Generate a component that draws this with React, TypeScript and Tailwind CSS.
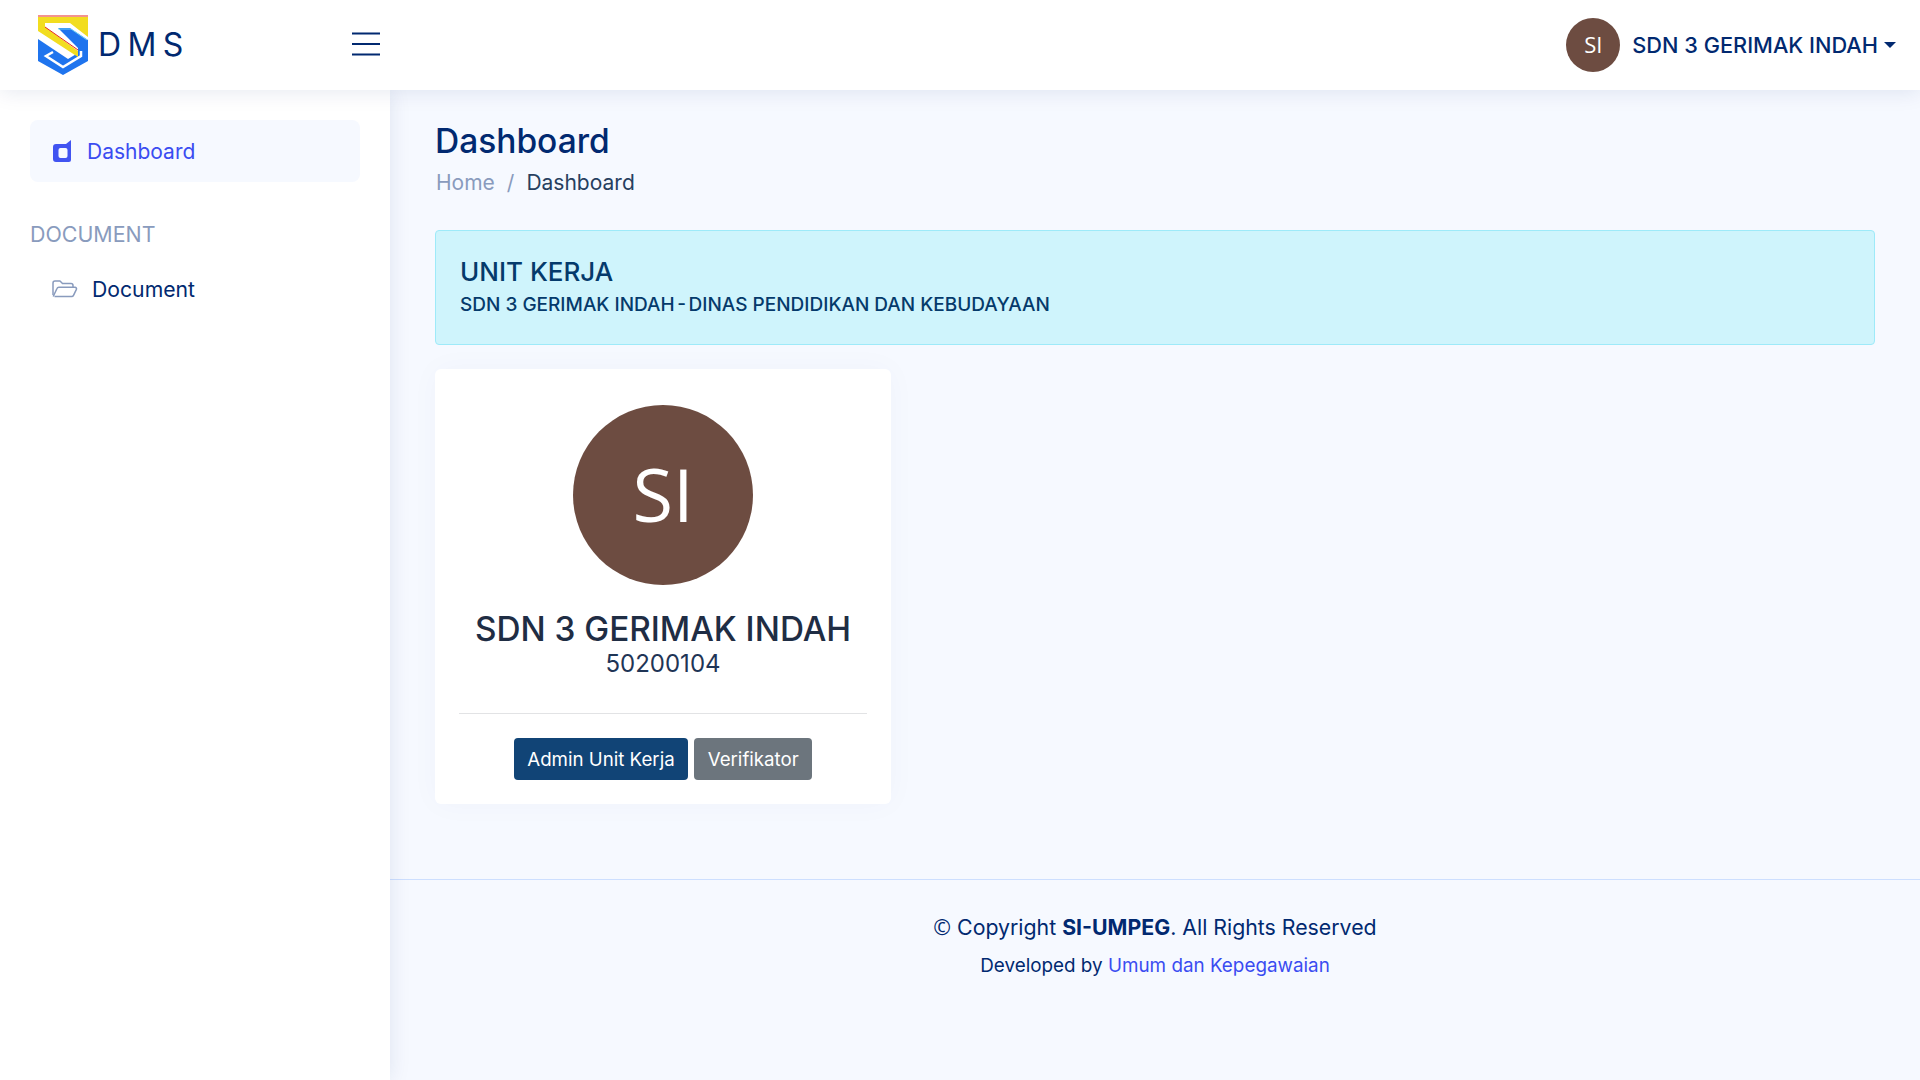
const font = { fontFamily: "Inter, 'Liberation Sans', sans-serif" }

function Logo() {
  return (
    <svg width="50" height="60" viewBox="0 0 50 60" className="shrink-0">
      <polygon points="0,1 50,1 50,46 25,60 0,46" fill="#ffffff" />
      <polygon points="20,13 32,13 50,25 50,46 25,60 0,46 0,24 24,40 30,44 40,38 40,33" fill="#1f74ee" />
      <polyline points="15,37 8,41 25,52 43,41 43,36" fill="none" stroke="#ffffff" strokeWidth="2.5" />
      <polygon points="0,2 50,2 50,22 32,8 7,8 7,12 40,36 40,42 0,16" fill="#f2dd1f" />
      <line x1="0" y1="1" x2="50" y2="1" stroke="#e8281e" strokeWidth="1.2" />
      <line x1="7" y1="12" x2="40" y2="35" stroke="#e8281e" strokeWidth="1" />
      <polyline points="20,14 33,14 49,25" fill="none" stroke="#7fe6f5" strokeWidth="0.8" />
    </svg>
  )
}

function DashIcon() {
  return (
    <svg width="18" height="22" viewBox="0 0 18 22" className="shrink-0">
      <path d="M3 4h10l5-4v20a2 2 0 0 1-2 2H3a3 3 0 0 1-3-3V7a3 3 0 0 1 3-3z" fill="#4154f1" />
      <rect x="5.5" y="8" width="9" height="10" rx="2" fill="#f6f9ff" />
    </svg>
  )
}

function FolderIcon() {
  return (
    <svg width="26" height="18" viewBox="0 0 26 18" fill="none" stroke="#899bbd" strokeWidth="1.5" strokeLinejoin="round" className="shrink-0">
      <path d="M1 15V3a2 2 0 0 1 2-2h5l2.5 2.5H19a2 2 0 0 1 2 2V7" />
      <path d="M1.2 16.5 5 8.5a2 2 0 0 1 1.8-1.2H23a1.5 1.5 0 0 1 1.4 2.1l-2.9 6a2 2 0 0 1-1.8 1.1H2.5" />
    </svg>
  )
}

function MenuIcon() {
  return (
    <svg width="28" height="24" viewBox="0 0 28 24" fill="none" stroke="#012970" strokeWidth="2" className="mb-[2px] shrink-0">
      <path d="M0 1.5h28M0 12h28M0 22.5h28" />
    </svg>
  )
}

function Header() {
  return (
    <header className="relative z-20 flex h-[90px] items-center justify-between bg-white pl-[38px] pr-6 shadow-[0_2px_20px_rgba(1,41,112,0.1)]">
      <div className="flex items-center">
        <div className="flex w-[314px] items-center">
          <Logo />
          <span className="ml-[10px] text-[32px] leading-none tracking-[0.2em] text-[#012970]">DMS</span>
        </div>
        <MenuIcon />
      </div>
      <div className="flex items-center">
        <div className="flex h-[54px] w-[54px] items-center justify-center rounded-full bg-[#6d4c41] pb-[2px] text-[22px] text-white" style={{ fontFamily: "'Open Sans', sans-serif" }}>
          SI
        </div>
        <span className="ml-3 text-[21.75px] font-medium text-[#012970]">SDN 3 GERIMAK INDAH</span>
        <span className="ml-[6px] h-0 w-0 border-x-[6px] border-t-[6px] border-x-transparent border-t-[#012970]" />
      </div>
    </header>
  )
}

function Sidebar() {
  return (
    <aside className="relative z-10 w-[390px] shrink-0 bg-white px-[30px] pt-[30px] shadow-[0_0_20px_rgba(1,41,112,0.1)]">
      <a className="flex h-[62px] items-center gap-4 rounded-lg bg-[#f6f9ff] pl-[23px] text-[21px] text-[#3a4cf1]">
        <DashIcon />
        <span className="pt-[2px]">Dashboard</span>
      </a>
      <div className="mt-[39px] text-[21.4px] leading-[27px] text-[#899bbd]">DOCUMENT</div>
      <a className="mt-[20px] flex h-[42px] items-center gap-[14px] pl-[22px] text-[21.2px] text-[#012970]">
        <FolderIcon />
        <span className="pt-[2px]">Document</span>
      </a>
    </aside>
  )
}

function Badge({ label, className }: { label: string; className: string }) {
  return (
    <span className={`flex h-[42px] items-center rounded-[4px] px-[13.5px] pt-[2px] text-[18.7px] text-white ${className}`}>{label}</span>
  )
}

function Main() {
  return (
    <main className="flex min-w-0 flex-1 flex-col">
      <div className="px-[45px] pt-[29px]">
        <h1 className="text-[33.5px] font-medium leading-[44px] text-[#012970]">Dashboard</h1>
        <nav className="mt-[6px] flex items-center pl-[1px] text-[21px] leading-[27px]">
          <span className="text-[#899bbd]">Home</span>
          <span className="mx-3 text-[#899bbd]">/</span>
          <span className="text-[#273f5f]">Dashboard</span>
        </nav>
        <div className="mt-[34px] h-[115px] rounded-[4px] border border-[#9eeaf9] bg-[#cff4fc] px-[24px] pt-[24px]">
          <h4 className="text-[26px] font-medium leading-[34px] text-[#053a6b]">UNIT KERJA</h4>
          <p className="mt-[4px] text-[19px] font-medium leading-[24px] text-[#053a6b]">
            SDN 3 GERIMAK <span className="[word-spacing:-2.5px]">INDAH - DINAS</span> PENDIDIKAN DAN KEBUDAYAAN
          </p>
        </div>
        <section className="mt-[24px] flex h-[435px] w-[456px] flex-col items-center rounded-md bg-white px-6 pt-[36px] shadow-[0_0_30px_rgba(1,41,112,0.03)]">
          <div className="flex h-[180px] w-[180px] items-center justify-center rounded-full bg-[#6d4c41] pb-[4px] text-[74px] text-white" style={{ fontFamily: "'Open Sans', sans-serif" }}>
            SI
          </div>
          <h2 className="mt-[23px] text-[33.3px] font-medium leading-[42px] text-[#1f2d44]">SDN 3 GERIMAK INDAH</h2>
          <p className="text-[24px] leading-[27px] text-[#1f3556]">50200104</p>
          <div className="mt-[36px] h-[1px] w-full bg-[#e2e3e5]" />
          <div className="mt-6 flex gap-[6px]">
            <Badge label="Admin Unit Kerja" className="bg-[#114476]" />
            <Badge label="Verifikator" className="bg-[#6c757d]" />
          </div>
        </section>
      </div>
      <footer className="mt-[75px] border-t border-[#cddfff] pt-[33px] text-center text-[#012970]">
        <p className="text-[21.3px] leading-[27px]"><span style={{ fontFamily: "'Open Sans', sans-serif" }}>©</span> Copyright <strong className="font-bold">SI-UMPEG</strong>. All Rights Reserved</p>
        <p className="mt-[13px] text-[18.85px] leading-[24px]">Developed by <a className="text-[#3a4cf1]">Umum dan Kepegawaian</a></p>
      </footer>
    </main>
  )
}

export default function App() {
  return (
    <div className="flex h-[1080px] flex-col overflow-hidden bg-[#f6f9ff]" style={font}>
      <Header />
      <div className="flex flex-1">
        <Sidebar />
        <Main />
      </div>
    </div>
  )
}
